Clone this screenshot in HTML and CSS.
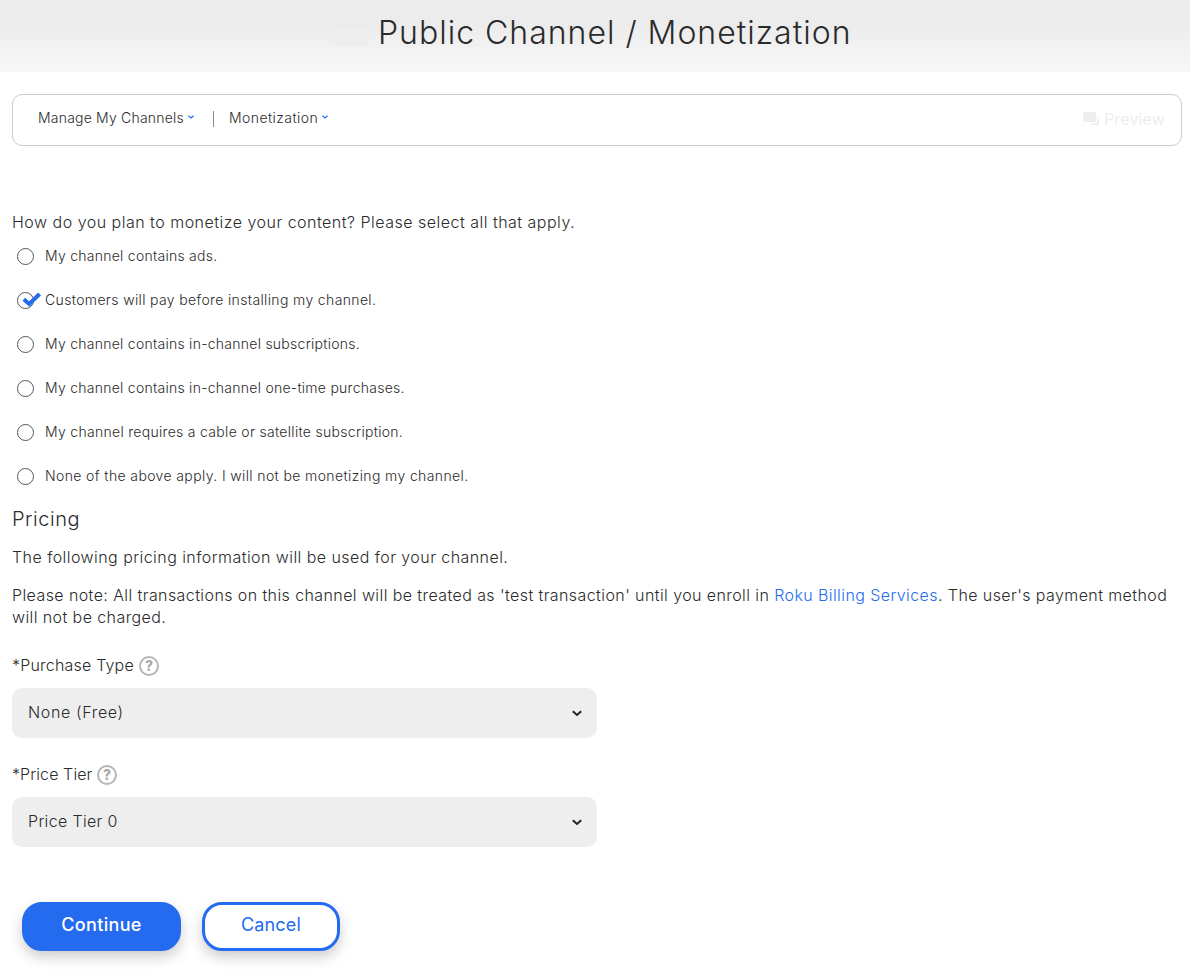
FILE: index.html
```html
<!DOCTYPE html>
<html lang="en">
<head>
<meta charset="utf-8">
<title>Public Channel / Monetization</title>
<link rel="stylesheet" href="styles.css">
</head>
<body>
<header class="banner"><span class="chip"></span><h1>Public Channel / Monetization</h1></header>
<main>
  <nav class="toolbar">
    <a class="crumb crumb-manage">Manage My Channels</a><svg class="caret" viewBox="0 0 6 4"><path d="M.4.7 3 2.9 5.6.7"/></svg>
    <span class="divider"></span>
    <a class="crumb crumb-money">Monetization</a><svg class="caret" viewBox="0 0 6 4"><path d="M.4.7 3 2.9 5.6.7"/></svg>
    <span class="preview"><svg viewBox="0 0 16 13"><rect width="13" height="10" rx="1"/><path d="M14.2 6.5h.8q1 0 1 1V12q0 1-1 1H9q-1 0-1-1v-.8h5.2q1 0 1-1z"/></svg>Preview</span>
  </nav>
  <p class="question">How do you plan to monetize your content? Please select all that apply.</p>
  <ul class="options">
    <li><i class="ring"></i><span class="o1">My channel contains ads.</span></li>
    <li><i class="ring"><svg class="check" viewBox="0 0 20 15"><path d="M1.8 7.3 7.2 12 17.6 2"/></svg></i><span class="o2">Customers will pay before installing my channel.</span></li>
    <li><i class="ring"></i><span class="o3">My channel contains in-channel subscriptions.</span></li>
    <li><i class="ring"></i><span class="o4">My channel contains in-channel one-time purchases.</span></li>
    <li><i class="ring"></i><span class="o5">My channel requires a cable or satellite subscription.</span></li>
    <li><i class="ring"></i><span class="o6">None of the above apply. I will not be monetizing my channel.</span></li>
  </ul>
  <h2>Pricing</h2>
  <p class="info">The following pricing information will be used for your channel.</p>
  <p class="note">Please note: All transactions on this channel will be treated as 'test transaction' until you enroll in <a>Roku Billing Services</a>. The user's payment method<br>will not be charged.</p>
  <div class="field">
    <div class="label"><span class="purchase">*Purchase Type</span><i class="help">?</i></div>
    <div class="select"><span class="none">None (Free)</span><svg viewBox="0 0 10 7"><path d="M.8 1.2 5 5 9.2 1.2"/></svg></div>
  </div>
  <div class="field">
    <div class="label"><span class="tier">*Price Tier</span><i class="help">?</i></div>
    <div class="select"><span class="zero">Price Tier 0</span><svg viewBox="0 0 10 7"><path d="M.8 1.2 5 5 9.2 1.2"/></svg></div>
  </div>
  <div class="actions"><button class="continue">Continue</button><button class="cancel">Cancel</button></div>
</main>
</body>
</html>
```
FILE: styles.css
```css
* { box-sizing: border-box; }
body { margin: 0; width: 1190px; height: 972px; overflow: hidden; background: #fff; color: #2b2b2b; font-family: Inter, "Liberation Sans", sans-serif; font-weight: 300; }
h1, h2, p, ul { margin: 0; padding: 0; font-weight: 300; }
.banner { height: 72px; padding-left: 334px; display: flex; align-items: flex-start; background: linear-gradient(#ececec 0, #ececec 35%, #f8f8f8 100%); }
.chip { width: 34px; height: 18px; margin: 28px 10px 0 0; background: #eee; }
h1 { font-size: 32px; line-height: 40px; margin-top: 13px; letter-spacing: 1px; white-space: nowrap; }
main { padding: 22px 8px 0 12px; }
.toolbar { height: 52px; border: 1px solid #ccc; border-radius: 10px; display: flex; align-items: flex-start; padding: 14px 16px 0 25px; font-size: 14px; line-height: 18px; white-space: nowrap; }
.crumb-manage { width: 150px; letter-spacing: .2px; }
.crumb-money { width: 93px; letter-spacing: .43px; }
.caret { width: 6px; height: 4px; margin-top: 6px; fill: none; stroke: #246bf0; stroke-width: 1.2; }
.divider { width: 1px; height: 16px; background: #888; margin: 2px 15px 0 19px; }
.preview { margin-left: auto; display: flex; color: #eee; font-size: 16px; font-weight: 400; line-height: 20px; letter-spacing: .15px; }
.preview svg { width: 16px; height: 13px; margin: 3px 5px 0 0; fill: #eee; }
.question { margin-top: 65px; font-size: 16px; line-height: 22px; letter-spacing: .49px; white-space: nowrap; }
.options { list-style: none; margin-top: 13px; }
.options li { display: flex; height: 44px; padding-left: 5px; font-size: 14px; line-height: 20px; letter-spacing: .3px; white-space: nowrap; }
.o1, .o3, .o4 { letter-spacing: .26px; }
.o2 { letter-spacing: .36px; }
.o6 { letter-spacing: .38px; }
.ring { position: relative; width: 17px; height: 17px; margin: 2px 11px 0 0; border: 1px solid #555; border-radius: 50%; }
.check { position: absolute; left: 4px; top: -1px; width: 20px; height: 15px; fill: none; stroke: #246bf0; stroke-width: 4; }
h2 { margin-top: -4px; font-size: 20px; line-height: 26px; letter-spacing: .55px; }
.info, .note { font-size: 16px; line-height: 22px; letter-spacing: .44px; white-space: nowrap; }
.info { margin-top: 14px; }
.note { margin-top: 16px; letter-spacing: .41px; }
.note a { color: #246bf0; }
.field { margin-top: 26px; width: 585px; }
.note + .field { margin-top: 27px; }
.label { display: flex; align-items: center; height: 22px; font-size: 16px; line-height: 20px; }
.label span { padding-bottom: 2px; }
.purchase { width: 127px; letter-spacing: .2px; }
.tier { width: 85px; letter-spacing: .1px; }
.help { width: 20px; height: 20px; border: 2px solid #b5b5b5; border-radius: 50%; color: #aaa; font-size: 14px; line-height: 16px; font-weight: 800; font-style: normal; text-align: center; }
.select { height: 50px; margin-top: 11px; padding: 0 15px 0 16px; border-radius: 10px; background: #eee; display: flex; align-items: center; justify-content: space-between; font-size: 16px; }
.select span { padding-bottom: 2px; }
.none { letter-spacing: .65px; }
.zero { letter-spacing: .33px; }
.select svg { width: 10px; height: 7px; margin-top: 1px; fill: none; stroke: #222; stroke-width: 2; }
.actions { margin: 55px 0 0 10px; display: flex; gap: 21px; }
.actions button { height: 49px; padding: 0 0 5px; border: 3px solid #246bf0; border-radius: 20px; font: 500 18px Inter, sans-serif; box-shadow: 0 6px 14px rgba(0,0,0,.2); }
.actions .continue { width: 159px; background: #246bf0; color: #fff; letter-spacing: .35px; }
.actions .cancel { width: 138px; background: #fff; color: #246bf0; font-weight: 400; letter-spacing: .15px; }
```
